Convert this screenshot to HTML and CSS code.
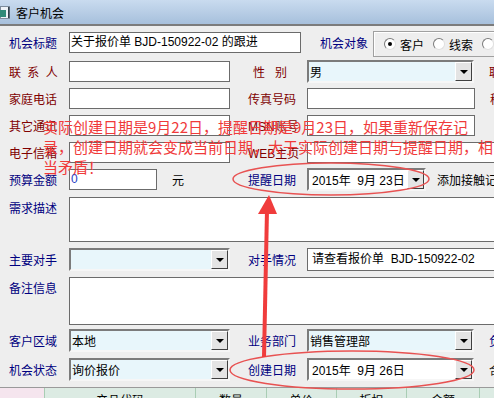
FILE: index.html
```html
<!DOCTYPE html>
<html lang="zh-CN">
  <head>
    <meta charset="UTF-8" />
    <title>客户机会</title>
    <link rel="stylesheet" href="styles.css">
  </head>
  <body>
    <div class="titlebar">
      <svg class="appicon" width="10" height="13" viewBox="0 0 10 13">
        <rect x="0.5" y="0.5" width="9" height="12" fill="#eef3f8" stroke="#7d8c9c"/>
        <rect x="0" y="4" width="6" height="7" fill="#2f8a78"/>
        <rect x="8" y="1" width="1.5" height="11" fill="#33404c"/>
      </svg>
      <span class="title">客户机会</span>
    </div>

    <div class="form">
      <div class="row r1">
        <span class="lbl">机会标题</span>
        <div class="in w232">关于报价单 BJD-150922-02 的跟进</div>
        <span class="lbl2 obj">机会对象</span>
        <div class="rgroup">
          <span class="radio on"></span><span class="rtxt">客户</span>
          <span class="radio"></span><span class="rtxt">线索</span>
          <span class="radio"></span>
        </div>
      </div>

      <div class="row">
        <span class="lbl red spaced">联 系 人</span>
        <div class="in w161"></div>
        <span class="lbl2 red sex">性&nbsp;&nbsp;&nbsp;别</span>
        <div class="sel w167"><span class="txt">男</span><span class="btn"></span></div>
        <span class="edge red">职务</span>
      </div>

      <div class="row">
        <span class="lbl red">家庭电话</span>
        <div class="in w161"></div>
        <span class="lbl2 red">传真号码</span>
        <div class="in w168"></div>
        <span class="edge red">移动电话</span>
      </div>

      <div class="row">
        <span class="lbl red">其它通讯</span>
        <div class="in w161"></div>
        <span class="lbl2 red">MSN账号</span>
        <div class="in w168"></div>
      </div>

      <div class="row">
        <span class="lbl red">电子信箱</span>
        <div class="in w161"></div>
        <span class="lbl2 red">WEB主页</span>
        <div class="in grow"></div>
      </div>

      <div class="row">
        <span class="lbl">预算金额</span>
        <div class="in w88 num">0</div>
        <span class="unit">元</span>
        <span class="lbl2">提醒日期</span>
        <div class="sel date w119"><span class="txt">2015年&nbsp;&nbsp;9月 23日</span><span class="btn"></span></div>
        <span class="extra">添加接触记录</span>
      </div>

      <div class="row tall r7">
        <span class="lbl">需求描述</span>
        <div class="ta h45"></div>
      </div>

      <div class="row r8">
        <span class="lbl">主要对手</span>
        <div class="sel w161"><span class="txt"></span><span class="btn"></span></div>
        <span class="lbl2">对手情况</span>
        <div class="in grow h23">请查看报价单&nbsp;&nbsp;BJD-150922-02</div>
      </div>

      <div class="row tall r9">
        <span class="lbl">备注信息</span>
        <div class="ta h48"></div>
      </div>

      <div class="row r10">
        <span class="lbl">客户区域</span>
        <div class="sel w161"><span class="txt">本地</span><span class="btn"></span></div>
        <span class="lbl2">业务部门</span>
        <div class="sel w167"><span class="txt">销售管理部</span><span class="btn"></span></div>
        <span class="edge">负责人</span>
      </div>

      <div class="row r11">
        <span class="lbl">机会状态</span>
        <div class="sel w161"><span class="txt">询价报价</span><span class="btn"></span></div>
        <span class="lbl2">创建日期</span>
        <div class="sel date w167"><span class="txt">2015年&nbsp;&nbsp;9月 26日</span><span class="btn"></span></div>
        <span class="edge dark">合同金额</span>
      </div>

      <div class="thead">
        <div class="th first"></div>
        <div class="th c1">产品代码</div>
        <div class="th c2">数量</div>
        <div class="th c3">单价</div>
        <div class="th c4">折扣</div>
        <div class="th c5">金额</div>
        <div class="th c6"></div>
      </div>
    </div>

    <div class="note">实际创建日期是9月22日，提醒日期是9月23日，如果重新保存记<br>录，创建日期就会变成当前日期，大于实际创建日期与提醒日期，相<br>当矛盾！</div>

    <svg class="marks" width="494" height="398" viewBox="0 0 494 398">
      <ellipse cx="331" cy="179" rx="98" ry="16" fill="none" stroke="#e85252" stroke-width="1.5"/>
      <ellipse cx="352" cy="370" rx="122" ry="19" fill="none" stroke="#e85252" stroke-width="1.5"/>
      <line x1="264" y1="357" x2="267" y2="210" stroke="#f03c3c" stroke-width="4"/>
      <polygon points="269,195 258,214 277,214" fill="#f03c3c"/>
    </svg>
  </body>
</html>
```

FILE: styles.css
```css
* {
  box-sizing: border-box;
}

html,
body {
  margin: 0;
}

body {
  position: relative;
  width: 494px;
  height: 398px;
  overflow: hidden;
  background-color: #eeeeee;
  font-family: "Liberation Sans", "Noto Sans CJK SC", sans-serif;
  font-size: 12px;
  color: #000;
}

.titlebar {
  height: 26px;
  display: flex;
  align-items: center;
  gap: 6px;
  background: linear-gradient(#c9dbef, #a7c0dc);
  border-bottom: 2px solid #7c7c7c;
}

.appicon {
  flex: none;
}

.form {
  width: 520px;
  padding-top: 3px;
}

.row {
  display: flex;
  align-items: center;
  height: 27px;
  white-space: nowrap;
}

.r1 {
  margin-bottom: 2px;
}

.tall {
  align-items: flex-start;
}

.r7 {
  height: 53px;
  padding-top: 4px;
}

.r9 {
  height: 54px;
  padding-top: 4px;
}

.r10 {
  margin-bottom: 2px;
}

.r11 {
  margin-bottom: 4px;
}

.lbl {
  flex: none;
  width: 69px;
  padding-left: 9px;
  color: #000080;
}

.tall .lbl {
  line-height: 24px;
}

.lbl2 {
  flex: none;
  width: 60px;
  margin-left: 17px;
  padding-left: 1px;
  color: #000080;
}

.red {
  color: #800000;
}

.spaced {
  word-spacing: 3px;
}

.sex {
  padding-left: 6px;
}

.obj {
  width: 54px;
  margin-left: 18px;
}

.edge {
  margin-left: 15px;
  color: #000080;
}

.edge.red {
  color: #800000;
}

.edge.dark {
  color: #222;
}

.unit {
  flex: none;
  width: 73px;
  padding-left: 15px;
}

.extra {
  margin-left: 11px;
}

/* text boxes */
.in {
  flex: none;
  height: 21px;
  line-height: 19px;
  padding: 0 1px;
  background: #fff;
  border: 1px solid #6b6b6b;
  overflow: hidden;
}

.in.h23 {
  height: 23px;
  line-height: 21px;
  padding-left: 4px;
}

.num {
  color: #1c3cc4;
}

.grow {
  flex: 1;
}

.w88 { width: 88px; }
.w119 { width: 119px; }
.w161 { width: 161px; }
.w167 { width: 167px; }
.w168 { width: 168px; }
.w232 { width: 232px; }

.ta {
  flex: 1;
  background: #fff;
  border: 1px solid #6b6b6b;
}

.h45 { height: 45px; }
.h48 { height: 48px; }

/* combo boxes */
.sel {
  flex: none;
  height: 23px;
  display: flex;
  align-items: center;
  padding-left: 1px;
  background: #e8f6fb;
  border: 2px solid;
  border-color: #7b7b7b #f6f6f6 #f6f6f6 #7b7b7b;
}

.sel.date {
  background: #fff;
  padding-left: 3px;
}

.sel .txt {
  flex: 1;
  overflow: hidden;
}

.sel .btn {
  flex: none;
  width: 17px;
  height: 19px;
  display: flex;
  align-items: center;
  justify-content: center;
  background: #e4e4e4;
  border: 1px solid;
  border-color: #fff #404040 #404040 #fff;
}

.sel .btn::after {
  content: "";
  border-left: 4px solid transparent;
  border-right: 4px solid transparent;
  border-top: 4px solid #000;
}

/* radio group */
.rgroup {
  flex: 1;
  align-self: flex-start;
  margin-top: 2px;
  height: 26px;
  display: flex;
  align-items: center;
  padding-left: 10px;
  border: 1px solid #a0a0a0;
  box-shadow: inset 1px 1px #fff;
}

.radio {
  position: relative;
  flex: none;
  width: 12px;
  height: 12px;
  border-radius: 50%;
  background: #fff;
  border: 1px solid;
  border-color: #7a7a7a #e0e0e0 #e0e0e0 #7a7a7a;
}

.radio.on::after {
  content: "";
  position: absolute;
  left: 3px;
  top: 3px;
  width: 4px;
  height: 4px;
  border-radius: 50%;
  background: #000;
}

.rtxt {
  margin: 0 9px 0 4px;
}

/* grid header */
.thead {
  display: flex;
  height: 20px;
  border-top: 1px solid #9a9a9a;
}

.th {
  flex: none;
  padding-top: 3px;
  text-align: center;
  background: #dcebe3;
  border-right: 1px solid #a9cdb4;
}

.th.first { width: 45px; background: #f5e5ee; }
.th.c1 { width: 151px; }
.th.c2 { width: 71px; }
.th.c3 { width: 70px; }
.th.c4 { width: 70px; }
.th.c5 { width: 73px; }
.th.c6 { width: 40px; }

/* annotation on top of the form */
.note {
  position: absolute;
  left: 43px;
  top: 117px;
  font-family: "Noto Sans CJK SC", sans-serif;
  font-size: 15px;
  line-height: 20px;
  color: #f03a3a;
  white-space: nowrap;
}

.marks {
  position: absolute;
  left: 0;
  top: 0;
  pointer-events: none;
}
```
